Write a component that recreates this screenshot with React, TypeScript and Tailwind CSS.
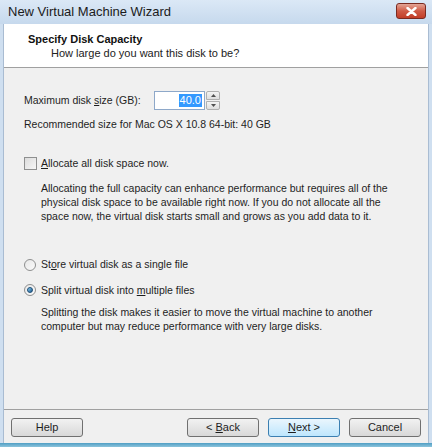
import React from 'react'

const font = { fontFamily: '"Liberation Sans", Arial, sans-serif' }

function Btn({ children, primary }: { children: React.ReactNode; primary?: boolean }) {
  return (
    <div
      className={
        'w-[72px] h-[19px] flex items-center justify-center rounded-[3px] border text-[11px] text-[#1e1e1e] ' +
        (primary
          ? 'border-[#3c7fb1] bg-gradient-to-b from-[#eaf6fd] to-[#bee6fd]'
          : 'border-[#707070] bg-gradient-to-b from-[#f2f2f2] to-[#d8d8d8]')
      }
    >
      {children}
    </div>
  )
}

function Radio({ checked }: { checked?: boolean }) {
  return (
    <div className="w-[12px] h-[12px] rounded-full border border-[#8e8f8f] bg-gradient-to-br from-[#e8e8e8] to-[#fafafa] flex items-center justify-center">
      {checked && <div className="w-[6px] h-[6px] rounded-full bg-gradient-to-br from-[#8ad1f5] to-[#1c5a8d] border border-[#1a4a73]" />}
    </div>
  )
}

export default function App() {
  return (
    <div className="w-[432px] h-[447px] flex flex-col bg-[#cfdff0] overflow-hidden" style={font}>
      {/* title bar */}
      <div className="h-[24px] flex items-center justify-between pl-[8px] pr-[6px] bg-gradient-to-b from-[#dbe8f6] to-[#c6d9ed]">
        <span className="text-[13px] text-[#1b1b1b]">New Virtual Machine Wizard</span>
        <div className="w-[30px] h-[16px] mt-[-2px] rounded-[3px] border border-[#7a2a20] bg-gradient-to-b from-[#e2a496] via-[#cf5a45] to-[#c23d27] flex items-center justify-center">
          <svg width="11" height="9" viewBox="0 0 11 9">
            <path d="M1.5 1 L9.5 8 M9.5 1 L1.5 8" stroke="#fff" strokeWidth="2.4" strokeLinecap="round" />
          </svg>
        </div>
      </div>

      <div className="flex-1 flex flex-col mx-[3px] bg-[#f0f0f0] border-x border-[#a9bcd2]">
        {/* header */}
        <div className="h-[44px] bg-white border-b border-[#a0a0a0] pt-[8px] pl-[24px]">
          <div className="text-[11px] font-bold text-[#111] leading-[14px]">Specify Disk Capacity</div>
          <div className="text-[11px] text-[#222] leading-[14px] pl-[23px]">How large do you want this disk to be?</div>
        </div>

        {/* body */}
        <div className="flex-1 flex flex-col text-[10.5px] text-[#1e1e1e] pl-[20px] pr-[12px]">
          <div className="flex items-center mt-[23px] h-[19px]">
            <span className="w-[130px]">
              Maximum disk <span className="underline">s</span>ize (GB):
            </span>
            <div className="w-[51px] h-[19px] border border-[#8ea8c9] bg-white flex items-center justify-end pr-[2px]">
              <span className="bg-[#3399ff] text-white text-[11px] leading-[13px] px-[1px]">40.0</span>
            </div>
            <div className="flex flex-col ml-[1px] h-[19px]">
              <div className="w-[14px] h-[9px] border border-[#b0b0b0] rounded-t-[2px] bg-gradient-to-b from-[#f4f4f4] to-[#dedede] flex items-center justify-center">
                <svg width="5" height="3" viewBox="0 0 5 3"><path d="M0 3 L2.5 0 L5 3Z" fill="#505050" /></svg>
              </div>
              <div className="w-[14px] h-[9px] mt-[1px] border border-[#b0b0b0] rounded-b-[2px] bg-gradient-to-b from-[#f4f4f4] to-[#dedede] flex items-center justify-center">
                <svg width="5" height="3" viewBox="0 0 5 3"><path d="M0 0 L2.5 3 L5 0Z" fill="#505050" /></svg>
              </div>
            </div>
          </div>
          <div className="mt-[7px] leading-[14px]">Recommended size for Mac OS X 10.8 64-bit: 40 GB</div>

          <div className="flex items-center mt-[25px]">
            <div className="w-[13px] h-[13px] border border-[#8e8f8f] bg-gradient-to-br from-[#dcdcdc] to-[#f6f6f6]" />
            <span className="ml-[4px]">
              <span className="underline">A</span>llocate all disk space now.
            </span>
          </div>
          <div className="mt-[9px] ml-[17px] leading-[14px] whitespace-nowrap">
            Allocating the full capacity can enhance performance but requires all of the
            <br />
            physical disk space to be available right now. If you do not allocate all the
            <br />
            space now, the virtual disk starts small and grows as you add data to it.
          </div>

          <div className="flex items-center mt-[34px]">
            <Radio />
            <span className="ml-[5px]">
              St<span className="underline">o</span>re virtual disk as a single file
            </span>
          </div>
          <div className="flex items-center mt-[10px]">
            <Radio checked />
            <span className="ml-[5px]">
              Split virtual disk into <span className="underline">m</span>ultiple files
            </span>
          </div>
          <div className="mt-[8px] ml-[17px] leading-[13.5px] whitespace-nowrap">
            Splitting the disk makes it easier to move the virtual machine to another
            <br />
            computer but may reduce performance with very large disks.
          </div>
        </div>

        {/* footer */}
        <div className="h-[34px] border-t border-[#a0a0a0] flex items-start pt-[8px] px-[7px]">
          <Btn>Help</Btn>
          <div className="flex-1" />
          <Btn>
            &lt; <span className="underline ml-[3px]">B</span>ack
          </Btn>
          <div className="w-[9px]" />
          <Btn primary>
            <span className="underline">N</span>ext &gt;
          </Btn>
          <div className="w-[9px]" />
          <Btn>Cancel</Btn>
        </div>
      </div>
      <div className="h-[4px] bg-gradient-to-b from-[#4f9ec4] to-[#8cc4dc]" />
    </div>
  )
}
